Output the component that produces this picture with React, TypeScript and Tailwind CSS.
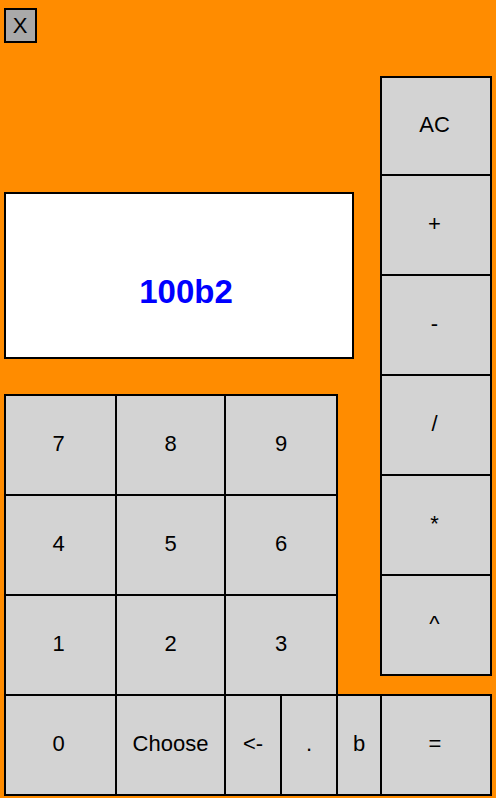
const digitRows = [
    ["7", "8", "9"],
    ["4", "5", "6"],
    ["1", "2", "3"],
]

const operators = ["+", "-", "/", "*", "^"]

const cell = "bg-[#d3d3d3] border-black text-[22px] flex items-center justify-center pb-[3px]"

const App = () => {
    return (
        <div className="w-[496px] h-[798px] bg-[#ff8c00] overflow-hidden text-black font-['Liberation_Sans',Arial,sans-serif]">
            <div className="flex items-start">
                <div className="flex flex-col pl-1">
                    <button className="mt-2 w-[33px] h-[35px] border-2 border-black bg-[#a9a9a9] text-[22px] leading-none flex items-center justify-center pr-px">
                        X
                    </button>
                    <div className="mt-[149px] w-[350px] h-[167px] border-2 border-black bg-white flex items-center justify-center pt-[32px] pl-[14px] text-[33px] font-bold text-[#0000ff]">
                        100b2
                    </div>
                    <div className="mt-[35px] w-[334px] grid grid-cols-[111px_109px_112px] border-l-2 border-t-2 border-black">
                        {digitRows.map((row, i) =>
                            row.map((d, j) => (
                                <button
                                    key={d}
                                    className={[
                                        cell,
                                        i < 2 ? "h-[100px] border-r-2 border-b-2" : "h-[98px] border-r-2",
                                        j === 0 ? "pr-1" : "",
                                    ].join(" ")}
                                >
                                    {d}
                                </button>
                            ))
                        )}
                    </div>
                </div>
                <div className="ml-[26px] mt-[76px] w-[112px] flex flex-col border-l-2 border-t-2 border-black">
                    <button className={`${cell} h-[98px] border-r-2 border-b-2 pr-[3px]`}>AC</button>
                    {operators.map((op) => (
                        <button key={op} className={`${cell} h-[100px] border-r-2 border-b-2 pr-[3px]`}>
                            {op}
                        </button>
                    ))}
                </div>
            </div>
            <div className="ml-1 w-[488px] h-[102px] flex border-2 border-black">
                <button className={`${cell} w-[109px] pr-1`}>0</button>
                <button className={`${cell} w-[109px] border-l-2`}>Choose</button>
                <button className={`${cell} w-[56px] border-l-2`}>&lt;-</button>
                <button className={`${cell} w-[56px] border-l-2`}>.</button>
                <button className={`${cell} w-[44px] border-l-2`}>b</button>
                <button className={`${cell} w-[110px] border-l-2 pr-[2px]`}>=</button>
            </div>
        </div>
    )
}

export default App
